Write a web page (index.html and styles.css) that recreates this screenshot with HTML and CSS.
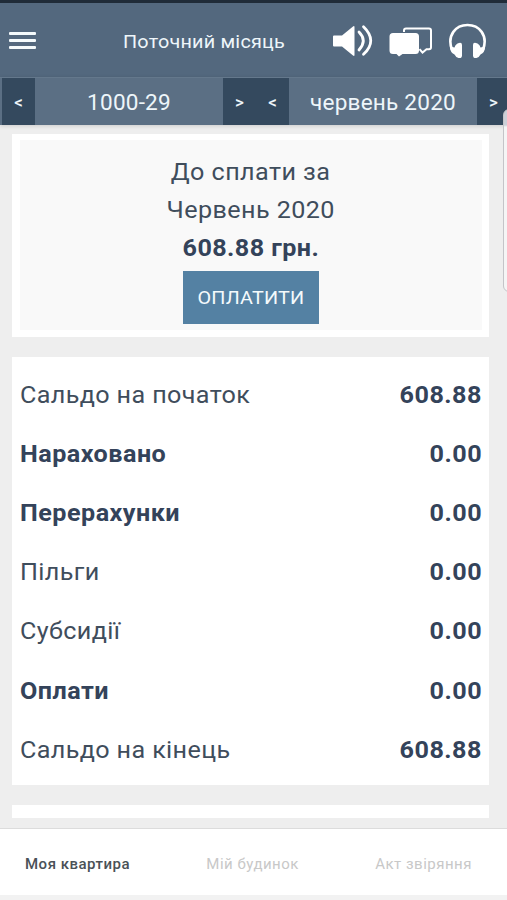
FILE: index.html
```html
<!DOCTYPE html>
<html lang="uk">
<head>
    <meta charset="UTF-8">
    <meta name="viewport" content="width=device-width, initial-scale=1.0">
    <title>Поточний місяць</title>
    <link rel="stylesheet" href="styles.css">
</head>
<body>
    <header class="header">
        <button class="menu-button" aria-label="Меню">
            <span></span>
            <span></span>
            <span></span>
        </button>
        <h1 class="title">Поточний місяць</h1>
        <div class="header-icons">
            <!-- Speaker -->
            <svg width="42" height="34" viewBox="0 0 42 34">
                <path d="M2 11.500h8L21 2.500q1.500-1.200 1.500.8v27.400q0 2-1.500.8L10 22.500H2q-1 0-1-1v-9q0-1 1-1z" fill="#fff"/>
                <path d="M27 8q8.500 8.500 0 18M31.500 2.800q14.500 14 0 27.500" fill="none" stroke="#fff" stroke-width="2.800" stroke-linecap="round"/>
            </svg>
            <!-- Messages -->
            <svg width="44" height="34" viewBox="0 0 44 34">
                <path d="M15 8V6.500q0-2 2-2h23q2 0 2 2v16.700q0 2-2 2h-2.500l-4 3.300-3-3.300" fill="none" stroke="#fff" stroke-width="2"/>
                <path d="M4 9h22.500q3.500 0 3.500 3.500v14q0 3.500-3.500 3.500h-13L10 32.500 7.500 30H4Q.5 30 .5 26.500v-14Q.5 9 4 9z" fill="#fff"/>
            </svg>
            <!-- Headphones -->
            <svg width="38" height="36" viewBox="0 0 38 36">
                <path d="M4 27C-1.500 12 8 2 19.500 2S40.500 12 35 27" fill="none" stroke="#fff" stroke-width="2.600"/>
                <path d="M9.500 20.500Q14 18.500 14 22v10.500q0 3-3.500 2.500-2.500-.5-4-3.500Q2 29.500 2 23.500l4.500 1q.5-2.500 3-4zM29.500 20.500Q25 18.500 25 22v10.500q0 3 3.500 2.500 2.500-.5 4-3.500Q37 29.500 37 23.500l-4.500 1q-.5-2.500-3-4z" fill="#fff"/>
            </svg>
        </div>
    </header>

    <nav class="selectors">
        <div class="selector">
            <button class="arrow">&lt;</button>
            <span class="value">1000-29</span>
            <button class="arrow">&gt;</button>
        </div>
        <div class="selector">
            <button class="arrow">&lt;</button>
            <span class="value">червень 2020</span>
            <button class="arrow arrow-last">&gt;</button>
        </div>
    </nav>

    <main class="content">
        <section class="card pay-card">
            <p>До сплати за</p>
            <p>Червень 2020</p>
            <p class="pay-sum">608.88 грн.</p>
            <button class="pay-button"><span>ОПЛАТИТИ</span></button>
        </section>

        <section class="card balance">
            <div class="row"><span>Сальдо на початок</span><b>608.88</b></div>
            <div class="row"><b>Нараховано</b><b>0.00</b></div>
            <div class="row"><b>Перерахунки</b><b>0.00</b></div>
            <div class="row"><span>Пільги</span><b>0.00</b></div>
            <div class="row"><span>Субсидії</span><b>0.00</b></div>
            <div class="row"><b>Оплати</b><b>0.00</b></div>
            <div class="row"><span>Сальдо на кінець</span><b>608.88</b></div>
        </section>

        <section class="card next-card"></section>
    </main>

    <footer class="tabs">
        <a class="tab active">Моя квартира</a>
        <a class="tab">Мій будинок</a>
        <a class="tab">Акт звіряння</a>
    </footer>

    <!-- Edge panel handle over the page -->
    <div class="edge-handle"></div>
</body>
</html>
```

FILE: styles.css
```css
* {
    box-sizing: border-box;
}

body {
    margin: 0;
    height: 900px;
    display: flex;
    flex-direction: column;
    position: relative;
    overflow: hidden;
    background-color: #eeeeee;
    color: #3f4d5c;
    font-family: Roboto, "Liberation Sans", sans-serif;
}

button {
    border: none;
    padding: 0;
    font-family: inherit;
    cursor: pointer;
}

/* Header */
.header {
    height: 77px;
    flex: none;
    display: flex;
    align-items: center;
    padding: 1px 20px 0 9px;
    border-top: 3px solid #1f2b38;
    background-color: #53687e;
}

.menu-button {
    width: 27px;
    display: flex;
    flex-direction: column;
    gap: 4px;
    background: none;
}

.menu-button span {
    height: 3px;
    border-radius: 1px;
    background-color: #f4fafc;
}

.title {
    margin: 0 0 0 87px;
    padding-top: 2px;
    width: 209px;
    font-size: 18.5px;
    font-weight: 400;
    letter-spacing: 0.2px;
    white-space: nowrap;
    color: #eef6fa;
    transform: scaleX(1.07);
    transform-origin: left;
}

.header-icons {
    display: flex;
    align-items: center;
    gap: 15px;
    padding-top: 1px;
}

.header-icons svg {
    display: block;
    flex: none;
}

/* Account and month selectors */
.selectors {
    height: 48px;
    flex: none;
    display: flex;
    padding-left: 2px;
    border-top: 1px solid #64788c;
    background-color: #5b6f84;
    box-shadow: 0 1px 4px rgba(0, 0, 0, 0.15);
}

.selector {
    display: flex;
    width: 254px;
    flex: none;
}

.selector + .selector {
    width: 251px;
}

.arrow {
    width: 33px;
    flex: none;
    font-size: 17px;
    font-weight: 500;
    color: #eef6fa;
    background-color: #34495e;
}

.arrow-last {
    width: 30px;
    padding-left: 3px;
}

.value {
    flex: 1;
    display: flex;
    align-items: center;
    justify-content: center;
    padding-top: 1px;
    font-size: 21.5px;
    letter-spacing: 0.2px;
    white-space: nowrap;
    color: #eef6fa;
    transform: scaleX(1.05);
}

/* Cards */
.content {
    flex: 1;
    display: flex;
    flex-direction: column;
    gap: 20px;
    padding: 9px 18px 0 12px;
}

.card {
    flex: none;
    background-color: #fff;
}

.pay-card {
    height: 203px;
    display: flex;
    flex-direction: column;
    align-items: center;
    padding-top: 13px;
    border: solid #fff;
    border-width: 6px 7px 7px 8px;
    background-color: #f9f9f9;
}

.pay-card p {
    margin: 0;
    font-size: 23.5px;
    line-height: 38px;
    letter-spacing: 0.4px;
    transform: scaleX(1.07);
}

.pay-card .pay-sum {
    font-weight: 700;
    color: #34435a;
}

.pay-button {
    width: 136px;
    height: 53px;
    margin-top: 4px;
    font-size: 18.5px;
    letter-spacing: 0.2px;
    color: #f4fafc;
    background-color: #5481a3;
}

.pay-button span {
    display: inline-block;
    transform: scaleX(1.07);
}

.balance {
    height: 428px;
    padding: 8px 7px 0 8px;
}

.row {
    height: 59.2px;
    display: flex;
    align-items: center;
    justify-content: space-between;
    font-size: 23.5px;
    letter-spacing: 0.35px;
}

.row > * {
    transform: scaleX(1.07);
    transform-origin: left;
}

.row b {
    letter-spacing: 0.45px;
    color: #34435a;
}

.row > :last-child {
    transform-origin: right;
}

.next-card {
    height: 13px;
}

/* Bottom tabs */
.tabs {
    height: 72px;
    flex: none;
    display: flex;
    justify-content: space-between;
    align-items: center;
    padding: 4px 35px 0 25px;
    border-top: 1px solid #dcdcdc;
    border-bottom: 5px solid #f2f2f2;
    background-color: #fff;
}

.tab {
    font-size: 15px;
    letter-spacing: 0.5px;
    color: #c8c8c8;
}

.tab.active {
    font-weight: 500;
    color: #4a5157;
}

.edge-handle {
    position: absolute;
    top: 109px;
    right: -8px;
    width: 12px;
    height: 183px;
    border: 1px solid #c4c4c8;
    border-radius: 6px;
    background: linear-gradient(#cdd0d8 0, #cdd0d8 15px, #f5f5f5 17px);
}
```
